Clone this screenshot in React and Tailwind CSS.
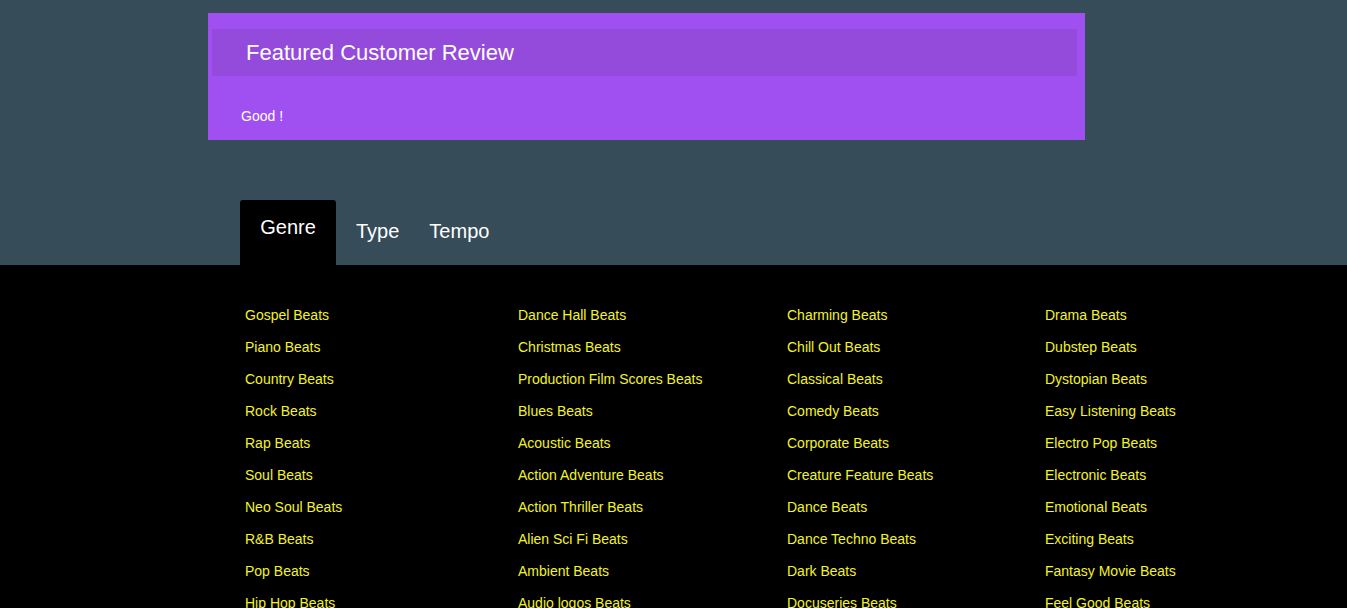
const COLS = [
  ["Gospel Beats", "Piano Beats", "Country Beats", "Rock Beats", "Rap Beats", "Soul Beats", "Neo Soul Beats", "R&B Beats", "Pop Beats", "Hip Hop Beats"],
  ["Dance Hall Beats", "Christmas Beats", "Production Film Scores Beats", "Blues Beats", "Acoustic Beats", "Action Adventure Beats", "Action Thriller Beats", "Alien Sci Fi Beats", "Ambient Beats", "Audio logos Beats"],
  ["Charming Beats", "Chill Out Beats", "Classical Beats", "Comedy Beats", "Corporate Beats", "Creature Feature Beats", "Dance Beats", "Dance Techno Beats", "Dark Beats", "Docuseries Beats"],
  ["Drama Beats", "Dubstep Beats", "Dystopian Beats", "Easy Listening Beats", "Electro Pop Beats", "Electronic Beats", "Emotional Beats", "Exciting Beats", "Fantasy Movie Beats", "Feel Good Beats"],
];

export default function App() {
  return (
    <div className="min-h-screen bg-[#364c58] font-['Liberation_Sans',Arial,sans-serif]">
      {/* Review card */}
      <div className="pt-[13px] pl-[208px]">
        <div className="w-[877px] h-[127px] bg-[#a04ff0] pt-4 px-1">
          <div className="h-[47px] w-[865px] bg-[#944bdc] flex items-center pl-[34px] pt-[1px]">
            <h2 className="text-[22px] leading-6 text-white">Featured Customer Review</h2>
          </div>
          <p className="mt-[32px] pl-[29px] text-[14px] text-white leading-4">Good !</p>
        </div>
      </div>

      {/* Tabs */}
      <div className="mt-[60px] pl-[240px] flex items-end h-[65px]">
        <div className="w-[96px] h-[65px] bg-black rounded-t-[3px] text-white text-[20px] text-center pt-[12px]">Genre</div>
        <div className="ml-[20px] h-[65px] pt-[16px] text-white text-[20px]">Type</div>
        <div className="ml-[30px] h-[65px] pt-[16px] text-white text-[20px]">Tempo</div>
      </div>

      {/* Beat list */}
      <div className="bg-black pt-[42px] pl-[245px] pb-10">
        <div className="grid grid-cols-[273px_269px_258px_auto]">
          {COLS.map((col, i) => (
            <ul key={i} className="flex flex-col">
              {col.map((b) => (
                <li key={b} className="h-[32px] text-[14px] leading-[16px] text-[#f3f326]">{b}</li>
              ))}
            </ul>
          ))}
        </div>
      </div>
    </div>
  );
}
